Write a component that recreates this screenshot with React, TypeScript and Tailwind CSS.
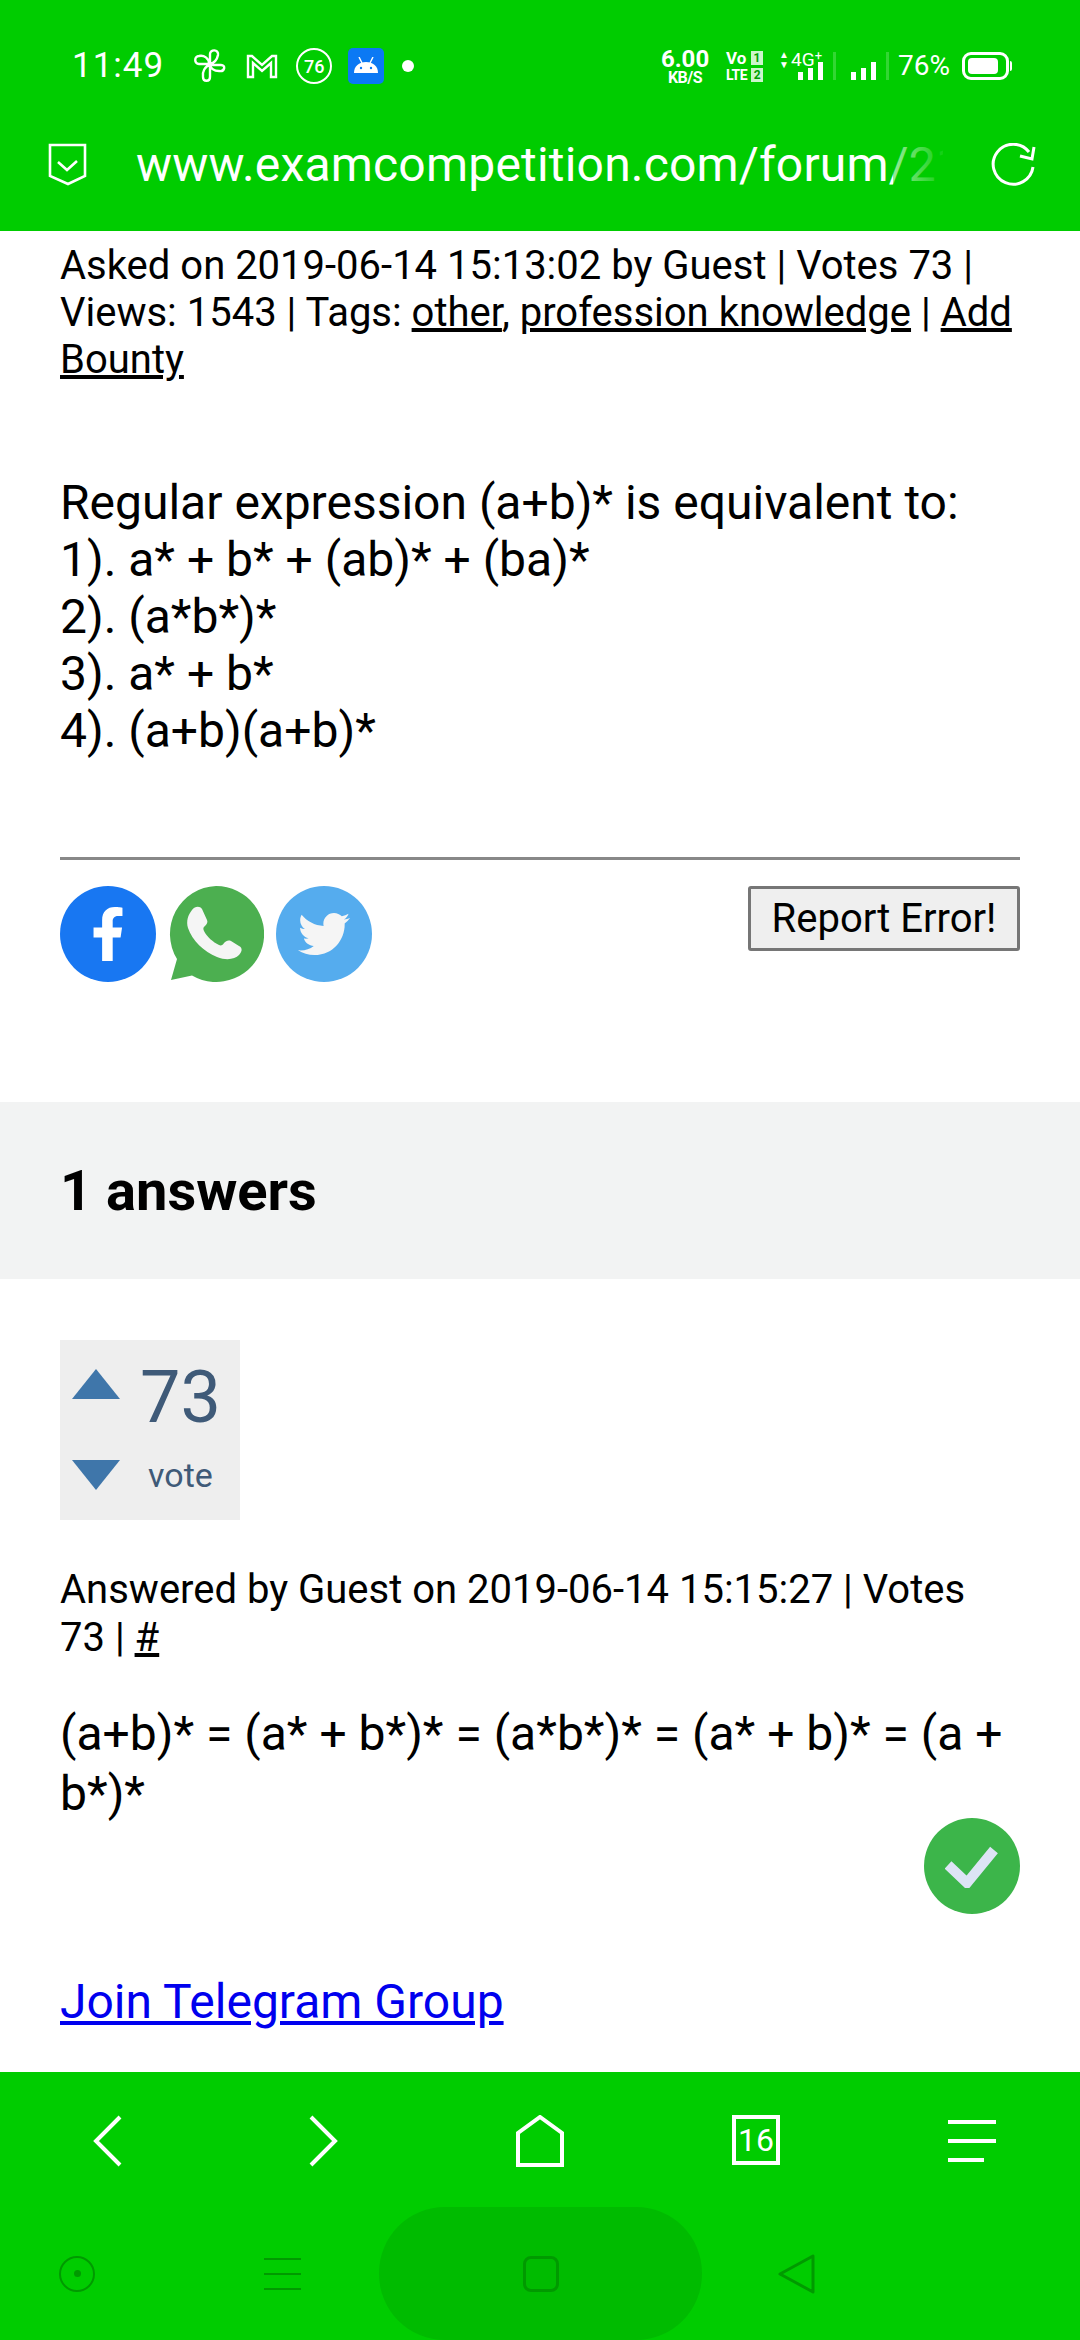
import { FaFacebookF, FaTwitter } from "react-icons/fa";

function StatusIcons() {
  return (
    <div className="flex items-center">
      <svg width="32" height="34" viewBox="0 0 32 34" fill="none" stroke="white" strokeWidth="2.4" className="ml-[30px]">
        <path d="M15 15H5c-5 0-5-8 0-8 5-1 10 2 10 8ZM16 15V5c0-5 9-5 8 1-1 5-4 8-8 9ZM16 16h11c5 0 4 7-2 6-5 0-8-2-9-6ZM16 16v12c0 5-7 5-7 0-1-5 2-11 7-12Z" />
      </svg>
      <svg width="32" height="26" viewBox="0 0 32 26" fill="none" stroke="white" strokeWidth="2.4" className="ml-[20px]">
        <path d="M2 24V3h4l10 9 10-9h4v21h-5V10l-9 8-9-8v14Z" />
      </svg>
      <div className="ml-[18px] flex h-[36px] w-[36px] items-center justify-center rounded-full border-2 border-white text-[18px] font-medium text-white">
        76
      </div>
      <div className="ml-[16px] flex h-[36px] w-[36px] items-center justify-center rounded-[5px] bg-[#0b79f4]">
        <svg width="26" height="18" viewBox="0 0 26 18" fill="white">
          <path d="M1 16C1 9 6 5 13 5s12 4 12 11Z" />
          <path d="M6 0l3 6M20 0l-3 6" stroke="white" strokeWidth="1.4" />
          <circle cx="8" cy="11" r="1.2" fill="#0b79f4" />
          <circle cx="18" cy="11" r="1.2" fill="#0b79f4" />
        </svg>
      </div>
      <div className="ml-[18px] h-[12px] w-[12px] rounded-full bg-white" />
    </div>
  );
}

function Signal() {
  return (
    <div className="flex h-[28px] items-end">
      <div className="h-[8px] w-[5px] bg-white" />
      <div className="ml-[5px] h-[12px] w-[5px] bg-white" />
      <div className="ml-[5px] h-[18px] w-[5px] bg-white" />
      <div className="ml-[10px] h-[28px] w-[3px] bg-white/20" />
    </div>
  );
}

function SimBox({ n }: { n: string }) {
  return (
    <span className="ml-[1px] flex h-[14px] w-[12px] items-center justify-center bg-white/80 text-[12px] font-bold leading-none text-[#00a000]">
      {n}
    </span>
  );
}

function NetworkIcons() {
  return (
    <div className="flex items-center text-white">
      <div className="flex w-[48px] flex-col items-center font-bold">
        <span className="text-[24px] leading-[22px]">6.00</span>
        <span className="mt-[1px] text-[16px] leading-[14px] tracking-[-0.5px]">KB/S</span>
      </div>
      <div className="ml-[17px] flex w-[37px] flex-col font-bold">
        <div className="flex items-center justify-between text-[17px] leading-[18px]">
          <span>Vo</span>
          <SimBox n="1" />
        </div>
        <div className="flex items-center justify-between text-[14px] leading-[16px] tracking-[-0.5px]">
          <span>LTE</span>
          <SimBox n="2" />
        </div>
      </div>
      <div className="relative ml-[15px] flex w-[58px] justify-end">
        <span className="absolute left-[1px] top-[-1px] text-[10px] leading-[8px]">▲</span>
        <span className="absolute left-[1px] top-[9px] text-[10px] leading-[8px]">▼</span>
        <span className="absolute left-[13px] top-[-3px] text-[19px] leading-[22px]">
          4G<sup className="text-[13px]">+</sup>
        </span>
        <Signal />
      </div>
      <div className="ml-[15px]">
        <Signal />
      </div>
      <span className="ml-[9px] text-[28px] leading-none">76%</span>
      <div className="ml-[12px] flex items-center">
        <div className="flex h-[28px] w-[47px] items-center rounded-[9px] border-[3px] border-white p-[3px]">
          <div className="h-full w-[30px] rounded-[4px] bg-white" />
        </div>
        <div className="ml-[1px] h-[10px] w-[2px] rounded-r-sm bg-white" />
      </div>
    </div>
  );
}

function UrlBar() {
  return (
    <div className="flex h-[99px] items-start">
      <svg width="40" height="44" viewBox="0 0 40 44" fill="none" stroke="white" strokeWidth="2.6" className="ml-[48px] mt-[11px]">
        <path d="M2 2h35v31l-17 8-18-8Z" />
        <path d="M10 19l9 8 10-9" />
      </svg>
      <div className="relative ml-[48px] mt-[5px] w-[807px] overflow-hidden whitespace-nowrap text-[48px] leading-[56px] tracking-[0.2px] text-white">
        www.examcompetition.com/forum/21
        <div className="absolute right-0 top-0 h-full w-[50px] bg-gradient-to-r from-[#00cc0066] to-[#00cc00ee]" />
      </div>
      <svg width="46" height="44" viewBox="0 0 46 44" fill="none" stroke="white" strokeWidth="3" className="ml-[48px] mt-[11px]">
        <path d="M38 9A20 20 0 1 0 42 24" />
        <path d="M43 4l-2 12-12-3" />
      </svg>
    </div>
  );
}

function WhatsApp() {
  return (
    <svg width="96" height="96" viewBox="0 0 96 96" className="ml-[12px]">
      <path d="M48 0a48 48 0 1 1-24 89.5L3 94l6-21A48 48 0 0 1 48 0Z" fill="#4caf50" />
      <path
        d="M24 24c3-4 8-4 10-1l5 11c1 2 0 4-2 6-2 1-2 3-1 5 3 6 9 11 15 14 2 1 4 0 5-2 2-2 4-3 7-2l8 5c4 2 3 6 0 9-4 4-12 6-22 2C36 66 24 54 20 42c-2-7 0-13 4-18Z"
        fill="#f5f5f5"
      />
    </svg>
  );
}

function CheckBadge() {
  return (
    <div className="flex h-[96px] w-[96px] items-center justify-center rounded-full bg-[#3cb54a]">
      <svg width="54" height="44" viewBox="0 0 54 44" fill="none" stroke="#dde4f5" strokeWidth="10">
        <path d="M3 21l19 18L49 6" />
      </svg>
    </div>
  );
}

function BottomBar() {
  return (
    <div className="flex h-[268px] flex-col bg-[#00cc00]">
      <div className="flex h-[135px] items-start pt-[43px]">
        <svg width="30" height="52" viewBox="0 0 30 52" fill="none" stroke="white" strokeWidth="4" className="ml-[93px]">
          <path d="M27 2L3 26l24 24" />
        </svg>
        <svg width="30" height="52" viewBox="0 0 30 52" fill="none" stroke="white" strokeWidth="4" className="ml-[185px]">
          <path d="M3 2l24 24L3 50" />
        </svg>
        <svg width="48" height="52" viewBox="0 0 48 52" fill="none" stroke="white" strokeWidth="4" className="ml-[178px]">
          <path d="M2 50V18L24 2l22 16v32Z" />
        </svg>
        <div className="ml-[168px] flex h-[50px] w-[48px] items-center justify-center border-[4px] border-white text-[32px] leading-none text-white">
          16
        </div>
        <div className="ml-[168px] flex w-[48px] flex-col gap-[15px] pt-[5px]">
          <div className="h-[4px] w-full bg-white" />
          <div className="h-[4px] w-full bg-white" />
          <div className="h-[4px] w-[36px] bg-white" />
        </div>
      </div>
      <div className="flex flex-1 items-center">
        <div className="ml-[59px] flex h-[36px] w-[36px] items-center justify-center rounded-full border-2 border-[#009a00]">
          <div className="h-[7px] w-[7px] rounded-full bg-[#009a00]" />
        </div>
        <div className="ml-[169px] flex w-[37px] flex-col gap-[13px]">
          <div className="h-[2px] bg-[#009a00]" />
          <div className="h-[2px] bg-[#009a00]" />
          <div className="h-[2px] bg-[#009a00]" />
        </div>
        <div className="ml-[78px] flex h-[133px] w-[323px] items-center justify-center rounded-[66px] bg-[#00bb00]">
          <div className="h-[36px] w-[36px] rounded-[8px] border-[3px] border-[#009a00]" />
        </div>
        <svg width="38" height="40" viewBox="0 0 38 40" fill="none" stroke="#009a00" strokeWidth="3" strokeLinejoin="round" className="ml-[76px]">
          <path d="M2 20L35 2v36Z" />
        </svg>
      </div>
    </div>
  );
}

export default function App() {
  return (
    <div className="flex h-[2340px] w-[1080px] flex-col overflow-hidden bg-white font-['Roboto',sans-serif] text-black">
      <header className="h-[231px] bg-[#00cc00]">
        <div className="flex h-[132px] items-center justify-between pl-[72px] pr-[68px]">
          <div className="flex items-center">
            <span className="text-[35px] leading-[38px] tracking-[1px] text-white">11:49</span>
            <StatusIcons />
          </div>
          <NetworkIcons />
        </div>
        <UrlBar />
      </header>

      <main className="flex-1 overflow-hidden">
        <div className="px-[60px] pt-[11px]">
          <p className="text-[40px] leading-[47px]">
            Asked on 2019-06-14 15:13:02 by Guest | Votes 73 | Views: 1543 | Tags: <u>other</u>, <u>profession knowledge</u> | <u>Add Bounty</u>
          </p>
          <p className="mt-[91px] text-[48px] leading-[57px]">
            Regular expression (a+b)* is equivalent to:
            <br />
            1). a* + b* + (ab)* + (ba)*
            <br />
            2). (a*b*)*
            <br />
            3). a* + b*
            <br />
            4). (a+b)(a+b)*
          </p>
          <hr className="mt-[98px] border-t-[3px] border-[#888888]" />
          <div className="mt-[26px] flex items-start justify-between">
            <div className="flex items-start">
              <div className="flex h-[96px] w-[96px] items-center justify-center rounded-full bg-[#1877f2] text-white">
                <FaFacebookF size={54} />
              </div>
              <WhatsApp />
              <div className="ml-[12px] flex h-[96px] w-[96px] items-center justify-center rounded-full bg-[#55acee] text-[#f5f5f5]">
                <FaTwitter size={52} />
              </div>
            </div>
            <button className="h-[65px] w-[272px] rounded-[3px] border-[3px] border-[#767676] bg-[#efefef] text-[40px] leading-none">
              Report Error!
            </button>
          </div>
        </div>

        <div className="mt-[120px] flex h-[177px] items-center bg-[#f2f3f3] px-[60px]">
          <h2 className="text-[56px] font-bold">1 answers</h2>
        </div>

        <div className="px-[60px] pt-[61px]">
          <div className="flex h-[180px] w-[180px] bg-[#eeeeee]">
            <div className="ml-[12px] flex flex-col">
              <svg width="48" height="32" viewBox="0 0 48 32" className="mt-[29px]">
                <path d="M24 0l24 30H0Z" fill="#3f76aa" />
              </svg>
              <svg width="48" height="32" viewBox="0 0 48 32" className="mt-[57px]">
                <path d="M0 2h48L24 32Z" fill="#3f76aa" />
              </svg>
            </div>
            <div className="ml-[20px] flex flex-col items-center text-[#3f5a78]">
              <span className="mt-[18px] text-[72px] leading-[80px]">73</span>
              <span className="mt-[17px] text-[34px] leading-[40px]">vote</span>
            </div>
          </div>
          <p className="mt-[46px] text-[40px] leading-[48px]">
            Answered by Guest on 2019-06-14 15:15:27 | Votes
            <br />
            73 | <u>#</u>
          </p>
          <p className="mt-[42px] text-[48px] leading-[60px]">(a+b)* = (a* + b*)* = (a*b*)* = (a* + b)* = (a + b*)*</p>
          <div className="mt-[-6px] flex justify-end">
            <CheckBadge />
          </div>
          <a className="mt-[60px] block text-[48px] leading-[56px] text-[#0000ee] underline">Join Telegram Group</a>
        </div>
      </main>

      <BottomBar />
    </div>
  );
}
